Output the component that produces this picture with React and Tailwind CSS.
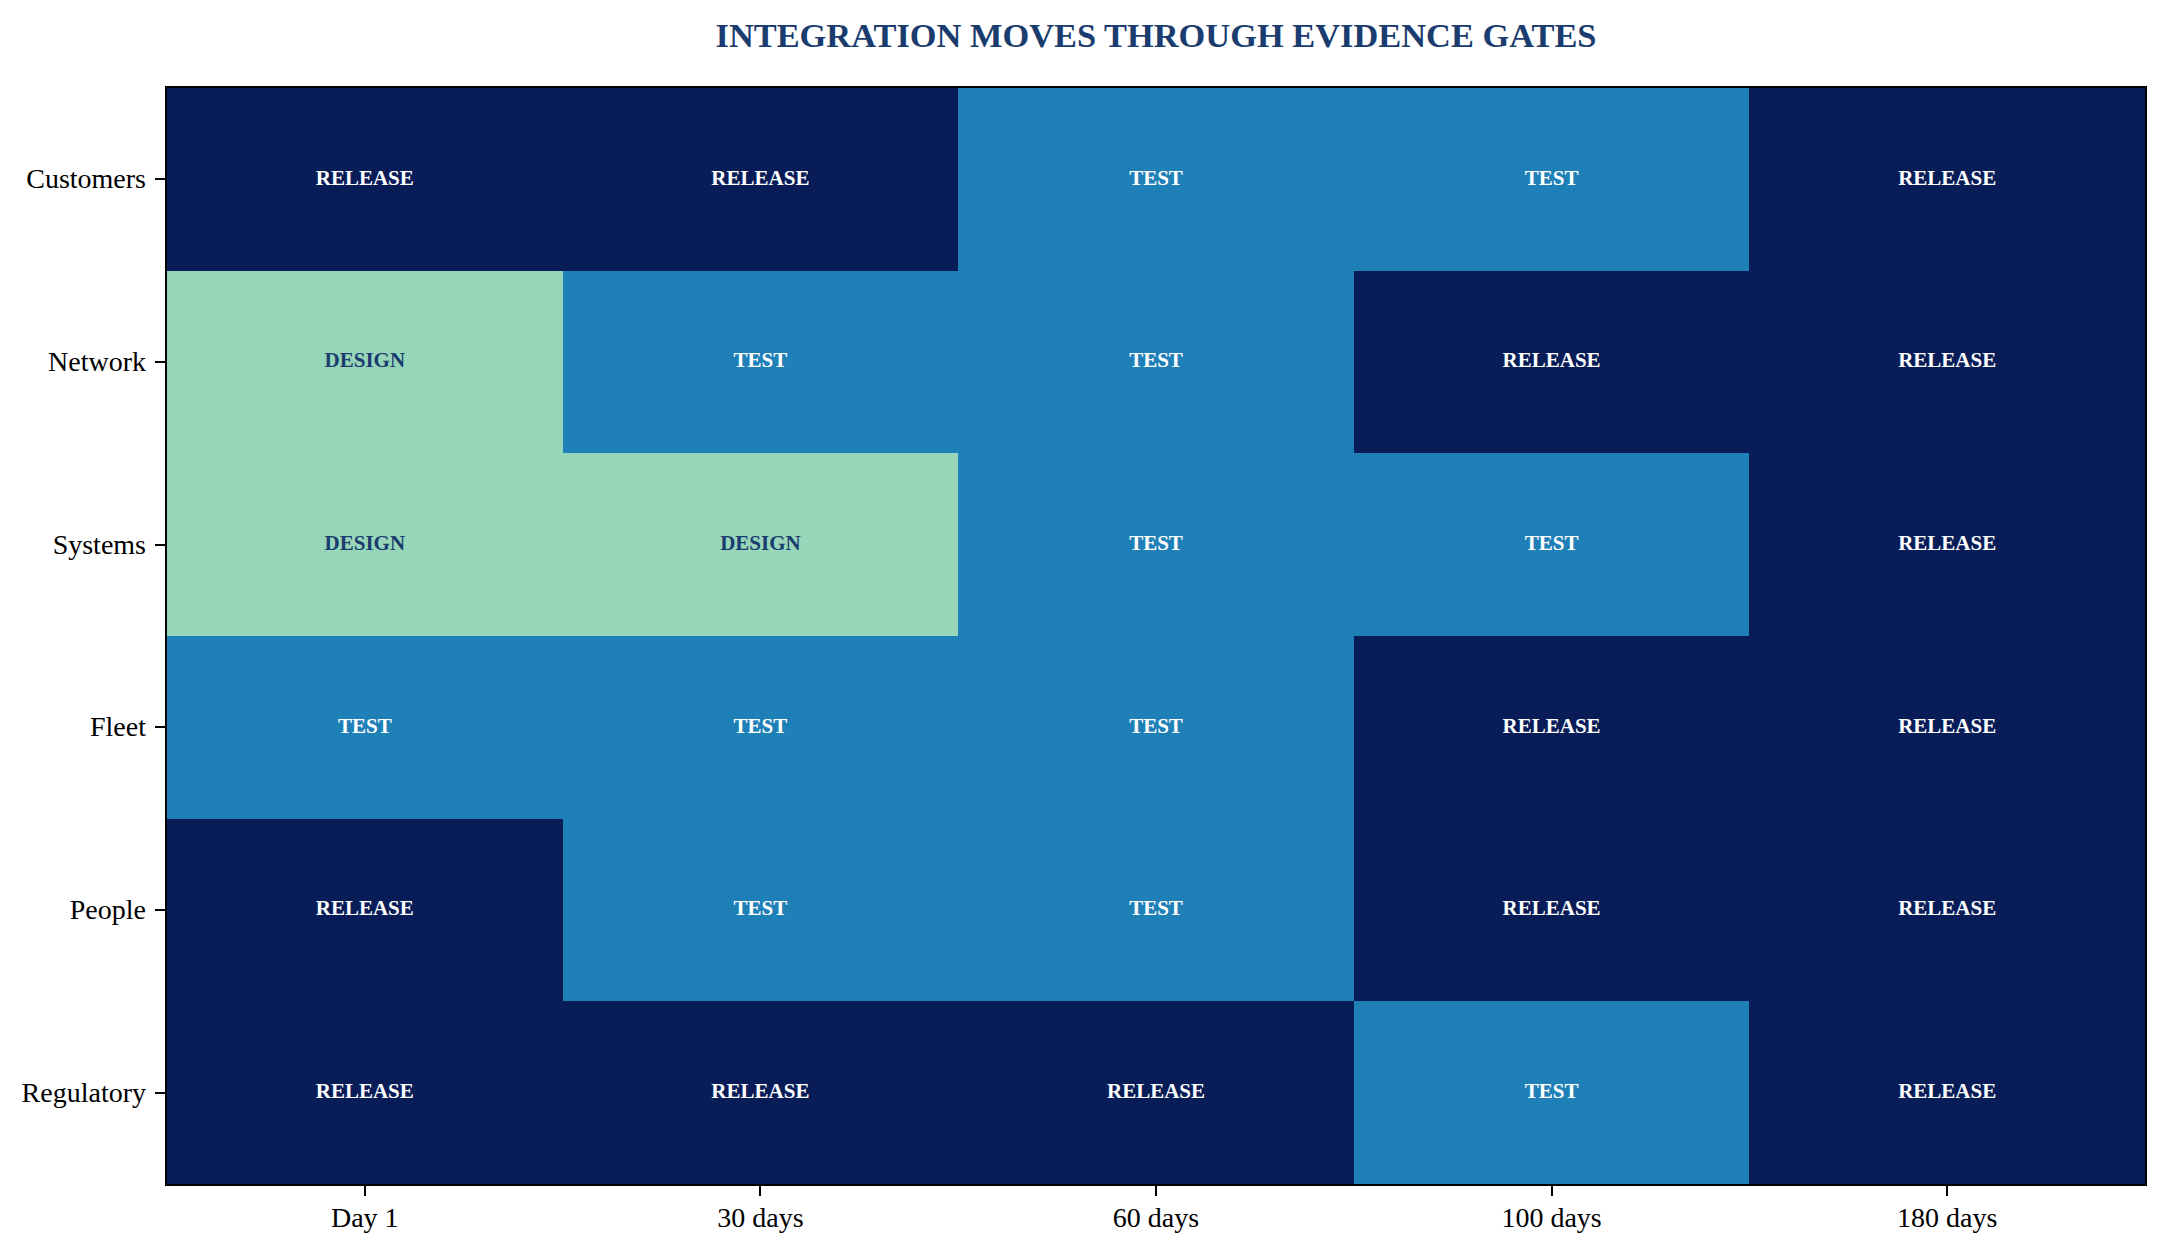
import React from "react";

const rows = [
  { name: "Customers", cells: ["RELEASE", "RELEASE", "TEST", "TEST", "RELEASE"] },
  { name: "Network", cells: ["DESIGN", "TEST", "TEST", "RELEASE", "RELEASE"] },
  { name: "Systems", cells: ["DESIGN", "DESIGN", "TEST", "TEST", "RELEASE"] },
  { name: "Fleet", cells: ["TEST", "TEST", "TEST", "RELEASE", "RELEASE"] },
  { name: "People", cells: ["RELEASE", "TEST", "TEST", "RELEASE", "RELEASE"] },
  { name: "Regulatory", cells: ["RELEASE", "RELEASE", "RELEASE", "TEST", "RELEASE"] },
];

const columns = ["Day 1", "30 days", "60 days", "100 days", "180 days"];

const stageStyle = {
  RELEASE: "bg-[#081d58] text-white",
  TEST: "bg-[#1f80b8] text-white",
  DESIGN: "bg-[#97d6b9] text-[#1a3c6e]",
};

export default function App() {
  return (
    <div className="w-[2167px] h-[1254px] bg-white overflow-hidden font-['Liberation_Serif','Times_New_Roman',serif] text-black">
      {/* Title */}
      <div className="h-[86px] pl-[165px] pt-[18px]">
        <div className="w-[1982px] text-center text-[34.4px] leading-[34px] font-bold text-[#1a3c6e]">
          INTEGRATION MOVES THROUGH EVIDENCE GATES
        </div>
      </div>

      {/* Plot row */}
      <div className="flex">
        {/* Y axis */}
        <div className="w-[165px] h-[1100px] pt-[2px] pb-[2px] grid grid-rows-6">
          {rows.map((r) => (
            <div key={r.name} className="flex items-center justify-end">
              <span className="text-[28px] leading-[28px]">{r.name}</span>
              <span className="ml-[9px] w-[10px] h-[2px] bg-black" />
            </div>
          ))}
        </div>

        {/* Heatmap */}
        <div className="w-[1982px] h-[1100px] border-2 border-black grid grid-cols-5 grid-rows-6">
          {rows.map((r) =>
            r.cells.map((c, i) => (
              <div
                key={r.name + i}
                className={`flex items-center justify-center pb-[2px] text-[21px] leading-[21px] font-bold ${stageStyle[c]}`}
              >
                {c}
              </div>
            ))
          )}
        </div>
      </div>

      {/* X axis */}
      <div className="pl-[167px]">
        <div className="w-[1978px] grid grid-cols-5">
          {columns.map((c) => (
            <div key={c} className="flex flex-col items-center">
              <span className="w-[2px] h-[10px] bg-black" />
              <span className="mt-[8px] text-[28px] leading-[28px]">{c}</span>
            </div>
          ))}
        </div>
      </div>
    </div>
  );
}
